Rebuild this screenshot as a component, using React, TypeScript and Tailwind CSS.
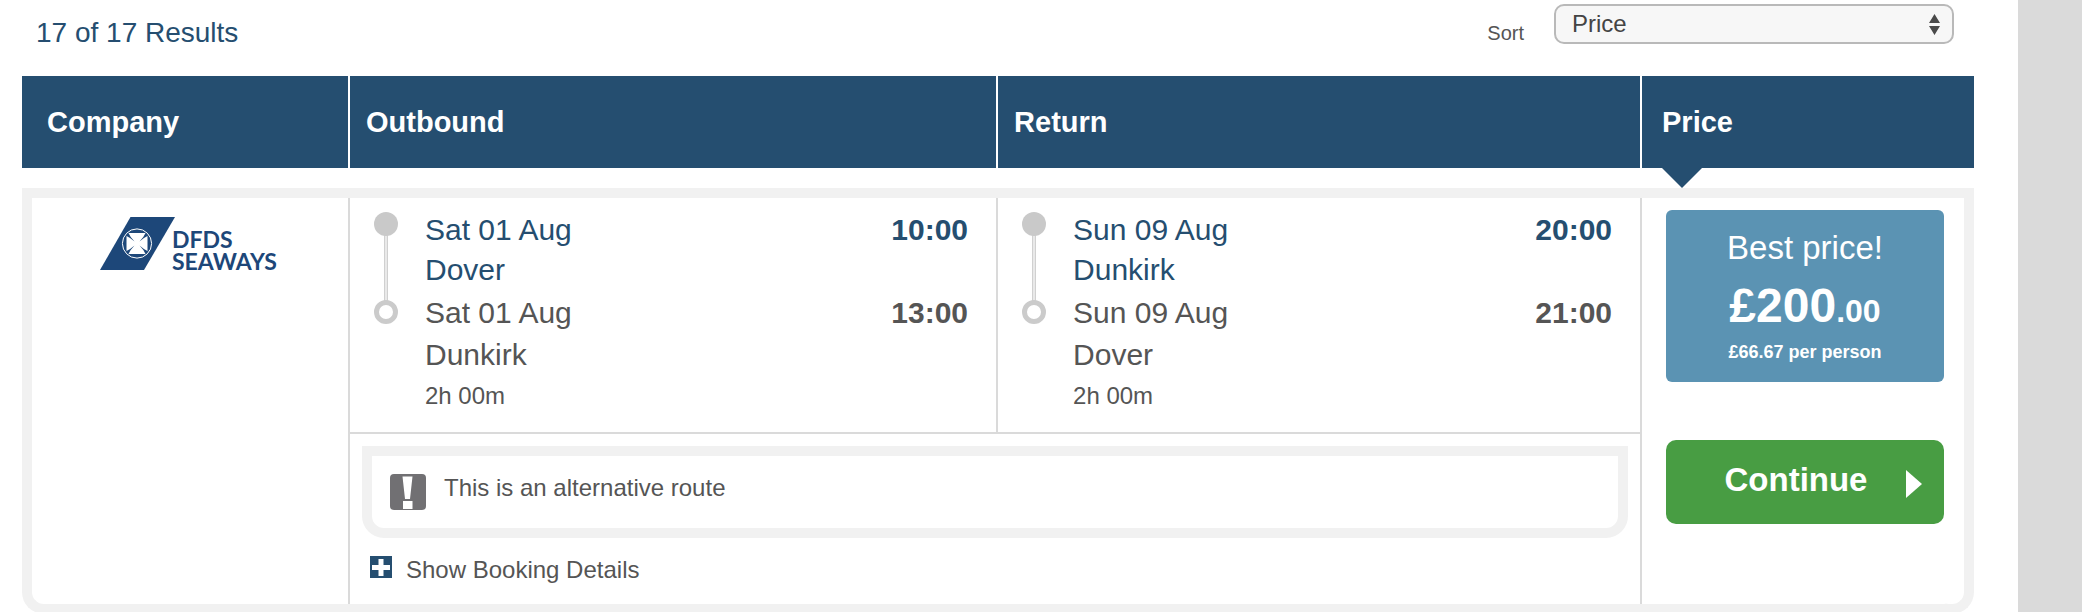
type Stop = { date: string; port: string; time: string };

type Leg = { from: Stop; to: Stop; duration: string };

const outbound: Leg = {
  from: { date: "Sat 01 Aug", port: "Dover", time: "10:00" },
  to: { date: "Sat 01 Aug", port: "Dunkirk", time: "13:00" },
  duration: "2h 00m",
};

const inbound: Leg = {
  from: { date: "Sun 09 Aug", port: "Dunkirk", time: "20:00" },
  to: { date: "Sun 09 Aug", port: "Dover", time: "21:00" },
  duration: "2h 00m",
};

function CompanyLogo() {
  return (
    <svg
      className="mx-auto"
      width="180"
      height="64"
      viewBox="0 0 180 64"
      role="img"
      aria-label="DFDS Seaways"
    >
      <path d="M30.500 0H75L44 53H0Z" fill="#1d4779" />
      <circle cx="37" cy="26.500" r="14.600" fill="none" stroke="#fff" strokeWidth="1" />
      <path
        d="M28.500 16H45.500Q44 20 39.500 24.500Q44 20.500 47.500 19V34Q44 32.500 39.500 28.500Q44 33 45.500 37H28.500Q30 33 34.500 28.500Q30 32.500 26.500 34V19Q30 20.500 34.500 24.500Q30 20 28.500 16Z"
        fill="#fff"
      />
      <g
        fill="#1d4779"
        fontFamily="Lato, 'Liberation Sans', sans-serif"
        fontSize="23"
        fontWeight="700"
      >
        <text x="72" y="31">DFDS</text>
        <text x="72" y="53">SEAWAYS</text>
      </g>
    </svg>
  );
}

function Timeline() {
  return (
    <svg width="26" height="115" viewBox="0 0 26 115" aria-hidden="true">
      <path d="M11.500 24V91M14.500 24V91" stroke="#d0d0d0" strokeWidth="1" />
      <path d="M13 24V91" stroke="#e9e9e9" strokeWidth="2" />
      <circle cx="13" cy="14" r="12" fill="#c9c9c9" />
      <circle cx="13" cy="102" r="9.500" fill="#fff" stroke="#cbcbcb" strokeWidth="5" />
    </svg>
  );
}

function LegDetails({ leg }: { leg: Leg }) {
  return (
    <div className="flex items-start pt-3 pr-7 pb-[18px] pl-[25px] text-[30px]">
      <Timeline />
      <div className="ml-[26px] flex-1">
        <div className="flex justify-between leading-[40px] text-[#254e70]">
          <p>
            {leg.from.date}
            <br />
            {leg.from.port}
          </p>
          <strong>{leg.from.time}</strong>
        </div>
        <div className="mt-0.5 flex justify-between leading-[42px]">
          <p>
            {leg.to.date}
            <br />
            {leg.to.port}
          </p>
          <strong>{leg.to.time}</strong>
        </div>
        <p className="mt-0.5 text-2xl leading-9">{leg.duration}</p>
      </div>
    </div>
  );
}

function SortSelect() {
  return (
    <div className="flex items-start gap-[30px] pt-1 pr-5">
      <label htmlFor="sort" className="pt-[17px] text-xl leading-6">
        Sort
      </label>
      <div className="relative">
        <select
          id="sort"
          className="h-10 w-[400px] appearance-none rounded-[10px] border-2 border-[#b9b9b9] bg-[#f7f7f7] px-4 text-2xl leading-8 text-[#444]"
        >
          <option>Price</option>
        </select>
        <svg
          className="pointer-events-none absolute top-2.5 right-3.5"
          width="11"
          height="21"
          viewBox="0 0 11 21"
          aria-hidden="true"
        >
          <path d="M5.500 0L11 9H0ZM0 12H11L5.500 21Z" fill="#4a4a4a" />
        </svg>
      </div>
    </div>
  );
}

function PriceBox() {
  return (
    <>
      <div className="rounded-md bg-[#5b93b3] py-[18px] text-center text-white">
        <p className="text-[33px] leading-[40px]">Best price!</p>
        <p className="mt-2.5 text-[48px] leading-[56px] font-bold">
          £200<span className="text-[32px] leading-none">.00</span>
        </p>
        <p className="mt-1.5 text-lg leading-6 font-bold">£66.67 per person</p>
      </div>
      <button
        type="button"
        className="mt-[58px] flex w-full items-end rounded-[10px] bg-[#489d43] pt-5 pr-[22px] pb-6 pl-5 text-[33px] leading-[40px] font-bold text-white"
      >
        <span className="flex-1">Continue</span>
        <svg className="mb-0.5" width="16" height="28" viewBox="0 0 16 28" aria-hidden="true">
          <path d="M0 0L16 14L0 28Z" fill="#fff" />
        </svg>
      </button>
    </>
  );
}

export default function App() {
  return (
    <div className="min-h-screen bg-[#dadada] pr-16 font-['Liberation_Sans',Arial,sans-serif] text-[#555]">
      <main className="min-h-screen bg-white pr-11 pl-[22px]">
        <div className="flex h-[76px] items-start justify-between">
          <h1 className="pt-[17px] pl-3.5 text-[28px] leading-8 text-[#254e70]">
            17 of 17 Results
          </h1>
          <SortSelect />
        </div>

        <table className="w-full table-fixed border-separate border-spacing-0 text-left">
          <colgroup>
            <col className="w-[326px]" />
            <col className="w-[33.2%]" />
            <col />
            <col className="w-[334px]" />
          </colgroup>
          <thead className="text-[29px] leading-[92px] text-white">
            <tr>
              <th className="bg-[#254e70] pl-[25px]">Company</th>
              <th className="border-l-2 border-white bg-[#254e70] pl-4">Outbound</th>
              <th className="border-l-2 border-white bg-[#254e70] pl-4">Return</th>
              <th className="relative border-l-2 border-white bg-[#254e70] pl-5">
                Price
                <svg
                  className="absolute top-full left-5"
                  width="40"
                  height="20"
                  viewBox="0 0 40 20"
                  aria-hidden="true"
                >
                  <path d="M0 0H40L20 20Z" fill="#254e70" />
                </svg>
              </th>
            </tr>
          </thead>
          <tbody className="align-top">
            <tr aria-hidden="true">
              <td colSpan={4} className="h-[30px] border-b-10 border-[#f1f1f1]" />
            </tr>
            <tr>
              <td
                rowSpan={2}
                className="rounded-bl-[22px] border-b-10 border-l-10 border-[#f1f1f1] pt-[19px]"
              >
                <CompanyLogo />
              </td>
              <td className="border-b-2 border-[#dadada] shadow-[inset_2px_0_0_#dadada]">
                <LegDetails leg={outbound} />
              </td>
              <td className="border-b-2 border-[#dadada] shadow-[inset_2px_0_0_#dadada]">
                <LegDetails leg={inbound} />
              </td>
              <td
                rowSpan={2}
                className="rounded-br-[22px] border-r-10 border-b-10 border-[#f1f1f1] pt-3 pr-5 pl-[26px] shadow-[inset_2px_0_0_#dadada]"
              >
                <PriceBox />
              </td>
            </tr>
            <tr>
              <td
                colSpan={2}
                className="border-b-10 border-[#f1f1f1] pt-3 pr-3 pb-[18px] pl-3.5 shadow-[inset_2px_0_0_#dadada]"
              >
                <div className="flex items-start gap-[18px] rounded-b-[22px] border-10 border-[#f1f1f1] px-[18px] py-4 text-2xl leading-8">
                  <svg
                    className="mt-0.5 mb-0.5"
                    width="36"
                    height="36"
                    viewBox="0 0 36 36"
                    aria-hidden="true"
                  >
                    <rect width="36" height="36" rx="4" fill="#717073" />
                    <path d="M12.500 2.500H22.500L20 25H15ZM13 27H22.500V35H13Z" fill="#fff" />
                  </svg>
                  <p>This is an alternative route</p>
                </div>
                <button
                  type="button"
                  className="mt-4 ml-2 flex items-start gap-3.5 text-2xl leading-8"
                >
                  <svg
                    className="mt-0.5"
                    width="22"
                    height="22"
                    viewBox="0 0 22 22"
                    aria-hidden="true"
                  >
                    <rect width="22" height="22" fill="#254e70" />
                    <path d="M11 3V20M2 11.500H20" stroke="#fff" strokeWidth="5" />
                  </svg>
                  Show Booking Details
                </button>
              </td>
            </tr>
          </tbody>
        </table>
      </main>
    </div>
  );
}
